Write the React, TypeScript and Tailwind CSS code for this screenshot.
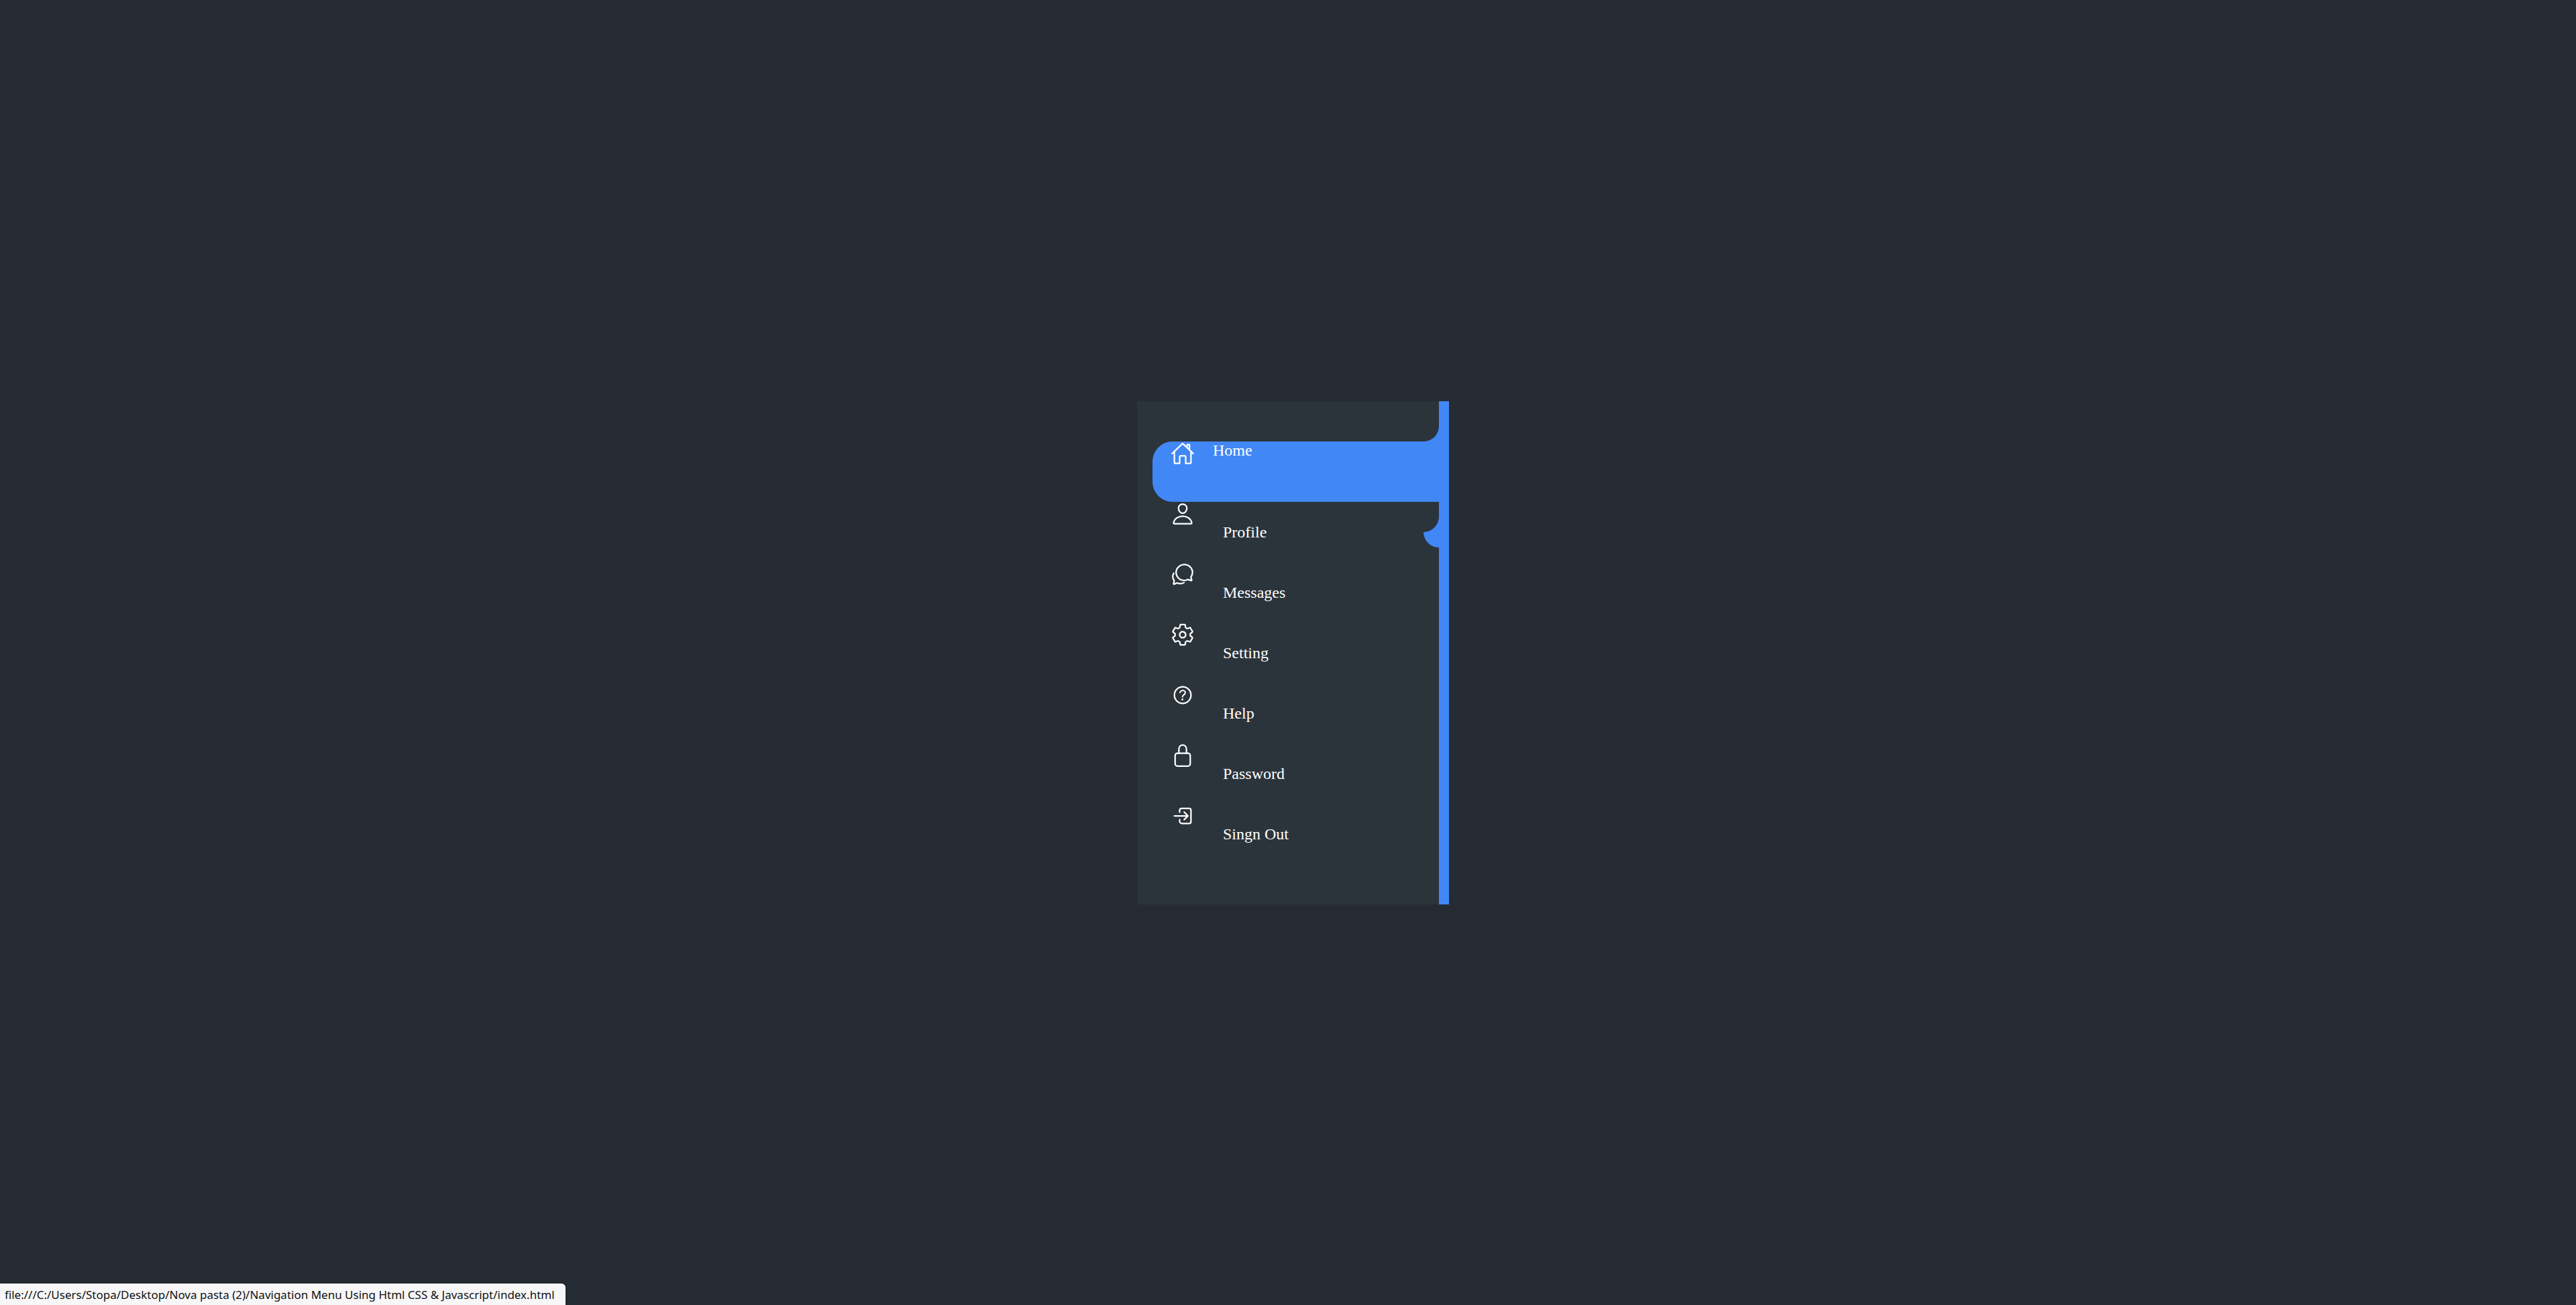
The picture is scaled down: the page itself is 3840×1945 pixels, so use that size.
import type { IconType } from "react-icons";
import {
  IoChatbubblesOutline,
  IoHelpCircleOutline,
  IoHomeOutline,
  IoLockClosedOutline,
  IoLogInOutline,
  IoPersonOutline,
  IoSettingsOutline,
} from "react-icons/io5";

type Item = { label: string; Icon: IconType };

const items: Item[] = [
  { label: "Home", Icon: IoHomeOutline },
  { label: "Profile", Icon: IoPersonOutline },
  { label: "Messages", Icon: IoChatbubblesOutline },
  { label: "Setting", Icon: IoSettingsOutline },
  { label: "Help", Icon: IoHelpCircleOutline },
  { label: "Password", Icon: IoLockClosedOutline },
  { label: "Singn Out", Icon: IoLogInOutline },
];

/* Blue corner filler with a concave cut-out towards the upper left. */
function Curve() {
  return (
    <span className="block size-[23px] bg-[#4187f6]">
      <span className="block size-full rounded-br-[23px] bg-[#2c343b]" />
    </span>
  );
}

function NavItem({ item, active }: { item: Item; active: boolean }) {
  const { label, Icon } = item;
  return (
    <li
      className={
        active ? "relative h-[90px] rounded-l-[30px] bg-[#4187f6]" : "relative h-[90px]"
      }
    >
      {active && (
        <>
          <span aria-hidden="true" className="absolute right-0 bottom-full">
            <Curve />
          </span>
          <span aria-hidden="true" className="absolute top-full right-0 pt-[22px]">
            <Curve />
            <span className="block size-[23px] rounded-bl-[23px] bg-[#4187f6]" />
          </span>
        </>
      )}
      <a href="#" className="flex h-full items-start text-white">
        <span className="flex w-[90px] shrink-0 justify-center">
          <Icon className="size-9" aria-hidden="true" />
        </span>
        <span className={active ? "leading-[27px]" : "pl-[15px] leading-[90px]"}>{label}</span>
      </a>
    </li>
  );
}

export default function App() {
  return (
    <div className="relative flex min-h-screen items-center justify-center bg-[#242b32] pl-[15px] font-['Liberation_Serif',serif] text-2xl">
      <nav className="border-r-[15px] border-[#4187f6] bg-[#2c343b] py-[60px] pl-[23px]">
        <ul className="w-[427px] max-w-full">
          {items.map((item, i) => (
            <NavItem key={item.label} item={item} active={i === 0} />
          ))}
        </ul>
      </nav>
      <div className="absolute bottom-0 left-0 h-8 rounded-tr-md bg-[#f7f7f7] pr-4 pl-[7px] font-['Noto_Sans',sans-serif] text-[17px] leading-[34px] whitespace-nowrap text-[#111111] shadow-md">
        file:///C:/Users/Stopa/Desktop/Nova pasta (2)/Navigation Menu Using Html CSS &amp; Javascript/index.html
      </div>
    </div>
  );
}
